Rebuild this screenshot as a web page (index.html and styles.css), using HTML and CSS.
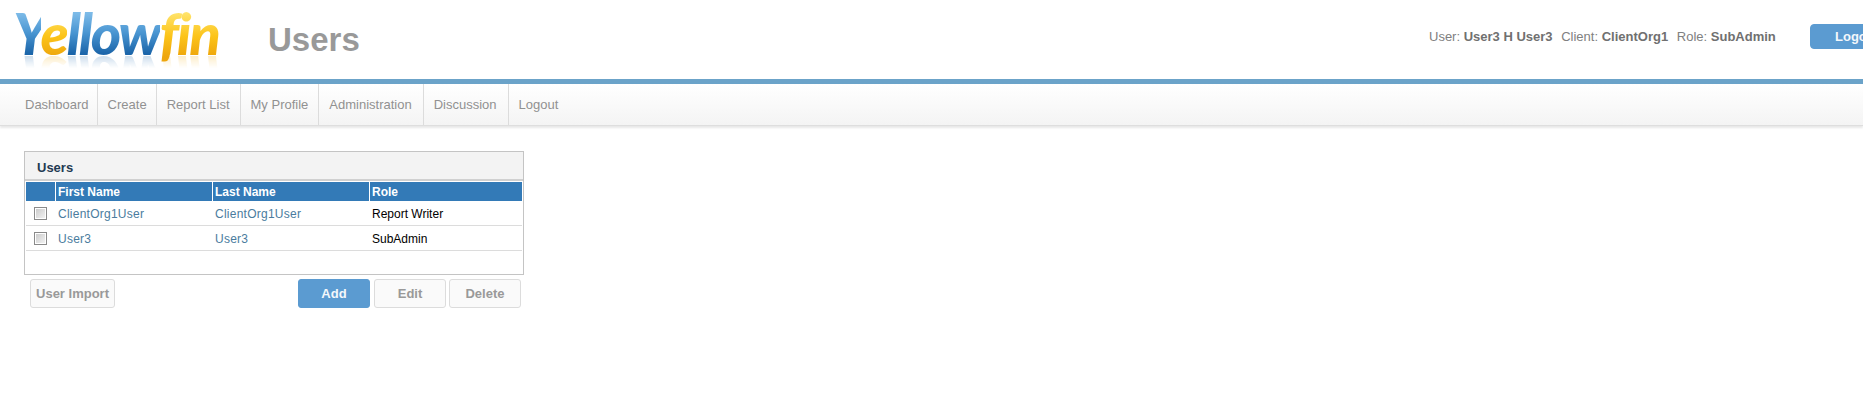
FILE: index.html
```html
<!DOCTYPE html>
<html lang="en">
<head>
    <meta charset="UTF-8" />
    <title>Users</title>
    <link rel="stylesheet" href="styles.css">
</head>
<body>
    <header class="top">
        <div class="logo"><span class="logo-blue">Y</span><span class="logo-yellow">e</span><span class="logo-blue">llow</span><span class="logo-yellow">fin</span></div>
        <h1 class="page-title">Users</h1>
        <div class="user-info">
            <span>User:</span> <b>User3 H User3</b>
            <span class="gap">Client:</span> <b>ClientOrg1</b>
            <span class="gap">Role:</span> <b>SubAdmin</b>
        </div>
        <button class="btn btn-blue logoff">Logoff</button>
    </header>

    <nav class="nav">
        <a class="first">Dashboard</a>
        <a class="tight">Create</a>
        <a>Report List</a>
        <a>My Profile</a>
        <a class="loose">Administration</a>
        <a class="loose">Discussion</a>
        <a>Logout</a>
    </nav>

    <div class="content">
        <div class="panel">
            <div class="panel-title">Users</div>
            <div class="grid">
                <div class="row head">
                    <div class="cell check"></div>
                    <div class="cell first-name">First Name</div>
                    <div class="cell last-name">Last Name</div>
                    <div class="cell role">Role</div>
                </div>
                <div class="row item">
                    <div class="cell check"><span class="box"></span></div>
                    <div class="cell first-name link">ClientOrg1User</div>
                    <div class="cell last-name link">ClientOrg1User</div>
                    <div class="cell role">Report Writer</div>
                </div>
                <div class="row item">
                    <div class="cell check"><span class="box"></span></div>
                    <div class="cell first-name link">User3</div>
                    <div class="cell last-name link">User3</div>
                    <div class="cell role">SubAdmin</div>
                </div>
            </div>
        </div>
        <div class="actions">
            <button class="btn btn-light import">User Import</button>
            <div class="actions-right">
                <button class="btn btn-blue wide add">Add</button>
                <button class="btn btn-light wide">Edit</button>
                <button class="btn btn-light wide">Delete</button>
            </div>
        </div>
    </div>
</body>
</html>
```

FILE: styles.css
```css
* {
    margin: 0;
    padding: 0;
    box-sizing: border-box;
}

html, body {
    height: 100%;
    overflow: hidden;
}

body {
    width: 1863px;
    background-color: #fff;
    font-family: "Liberation Sans", Arial, sans-serif;
    font-size: 12px;
    color: #000;
}

.top {
    display: flex;
    align-items: center;
    height: 79px;
    padding-left: 13px;
    white-space: nowrap;
}

.logo {
    flex: none;
    align-self: flex-start;
    width: 255px;
    height: 44px;
    margin-top: 11px;
    font-family: "Lato", sans-serif;
    font-style: italic;
    font-weight: 900;
    font-size: 58px;
    line-height: 44px;
    letter-spacing: -2.2px;
    -webkit-box-reflect: below 1px linear-gradient(transparent 72%, rgba(0, 0, 0, 0.22));
}

.logo-blue {
    background: linear-gradient(#7dbbe8 22%, #4a96d2 50%, #1c66aa 80%);
    -webkit-background-clip: text;
    background-clip: text;
    color: transparent;
}

.logo-yellow {
    background: linear-gradient(#ffe36a 22%, #fcc419 55%, #eea60c 85%);
    -webkit-background-clip: text;
    background-clip: text;
    color: transparent;
}

.page-title {
    flex: none;
    width: 1161px;
    font-size: 33px;
    font-weight: 700;
    color: #999;
}

.user-info {
    flex: none;
    width: 381px;
    margin-bottom: 7px;
    font-size: 13px;
    color: #808080;
}

.user-info b {
    color: #707070;
}

.user-info .gap {
    margin-left: 5px;
}

.btn {
    font-family: "Liberation Sans", Arial, sans-serif;
    font-size: 13px;
    font-weight: 700;
    border-radius: 3px;
    height: 29px;
}

.btn-blue {
    background-color: #5b9bd1;
    border: 1px solid #5b9bd1;
    color: #f3f7fb;
}

.btn-light {
    background-color: #fafafa;
    border: 1px solid #dcdcdc;
    color: #999;
}

.logoff {
    flex: none;
    width: 100px;
    height: 25px;
    margin-bottom: 6px;
    text-align: left;
    padding-left: 24px;
    border-radius: 4px;
}

.nav {
    display: flex;
    height: 47px;
    border-top: 5px solid #6ba3c9;
    background: linear-gradient(#fff, #f4f4f4);
    border-bottom: 1px solid #dedede;
    box-shadow: 0 2px 2px #e8e8e8;
    padding-left: 14px;
}

.nav a {
    display: flex;
    align-items: center;
    padding: 0 10px;
    border-left: 1px solid #dcdcdc;
    font-size: 13px;
    color: #919191;
}

.nav a.first {
    border-left: none;
    padding: 0 8px 0 11px;
}

.nav a.tight {
    padding-right: 9px;
}

.nav a.loose {
    padding-right: 11px;
}

.content {
    width: 500px;
    margin: 25px 0 0 24px;
}

.panel {
    height: 124px;
    border: 1px solid #c4c4c4;
}

.panel-title {
    height: 29px;
    padding: 8px 0 0 12px;
    background-color: #f3f3f3;
    border-bottom: 2px solid #d0d0d0;
    font-size: 13px;
    font-weight: 700;
    color: #1f3a52;
}

.grid {
    padding: 1px;
}

.row {
    display: flex;
    height: 25px;
    border-bottom: 1px solid #dcdcdc;
    font-size: 12px;
}

.row.head {
    height: 19px;
    background-color: #337ab7;
    border-bottom: none;
    color: #fff;
    font-weight: 700;
}

.cell {
    display: flex;
    align-items: center;
    padding-left: 2px;
}

.head .cell + .cell {
    border-left: 1px solid #fff;
}

.item .first-name,
.item .last-name,
.item .role {
    padding-top: 2px;
    padding-left: 3px;
}

.check {
    width: 29px;
    padding-left: 8px;
}

.first-name,
.last-name {
    width: 157px;
}

.role {
    flex: 1;
}

.link {
    letter-spacing: 0.25px;
    color: #4a7c9e;
}

.box {
    width: 13px;
    height: 13px;
    border: 1px solid #8a8a8a;
    box-shadow: inset 0 0 0 1px #fff;
    background: linear-gradient(135deg, #c8c8c8, #f6f6f6);
}

.actions {
    display: flex;
    justify-content: space-between;
    padding: 4px 3px 0 6px;
}

.actions-right {
    display: flex;
    gap: 3px;
}

.import {
    width: 85px;
}

.wide {
    width: 72px;
}

.add {
    margin-right: 1px;
}
```
